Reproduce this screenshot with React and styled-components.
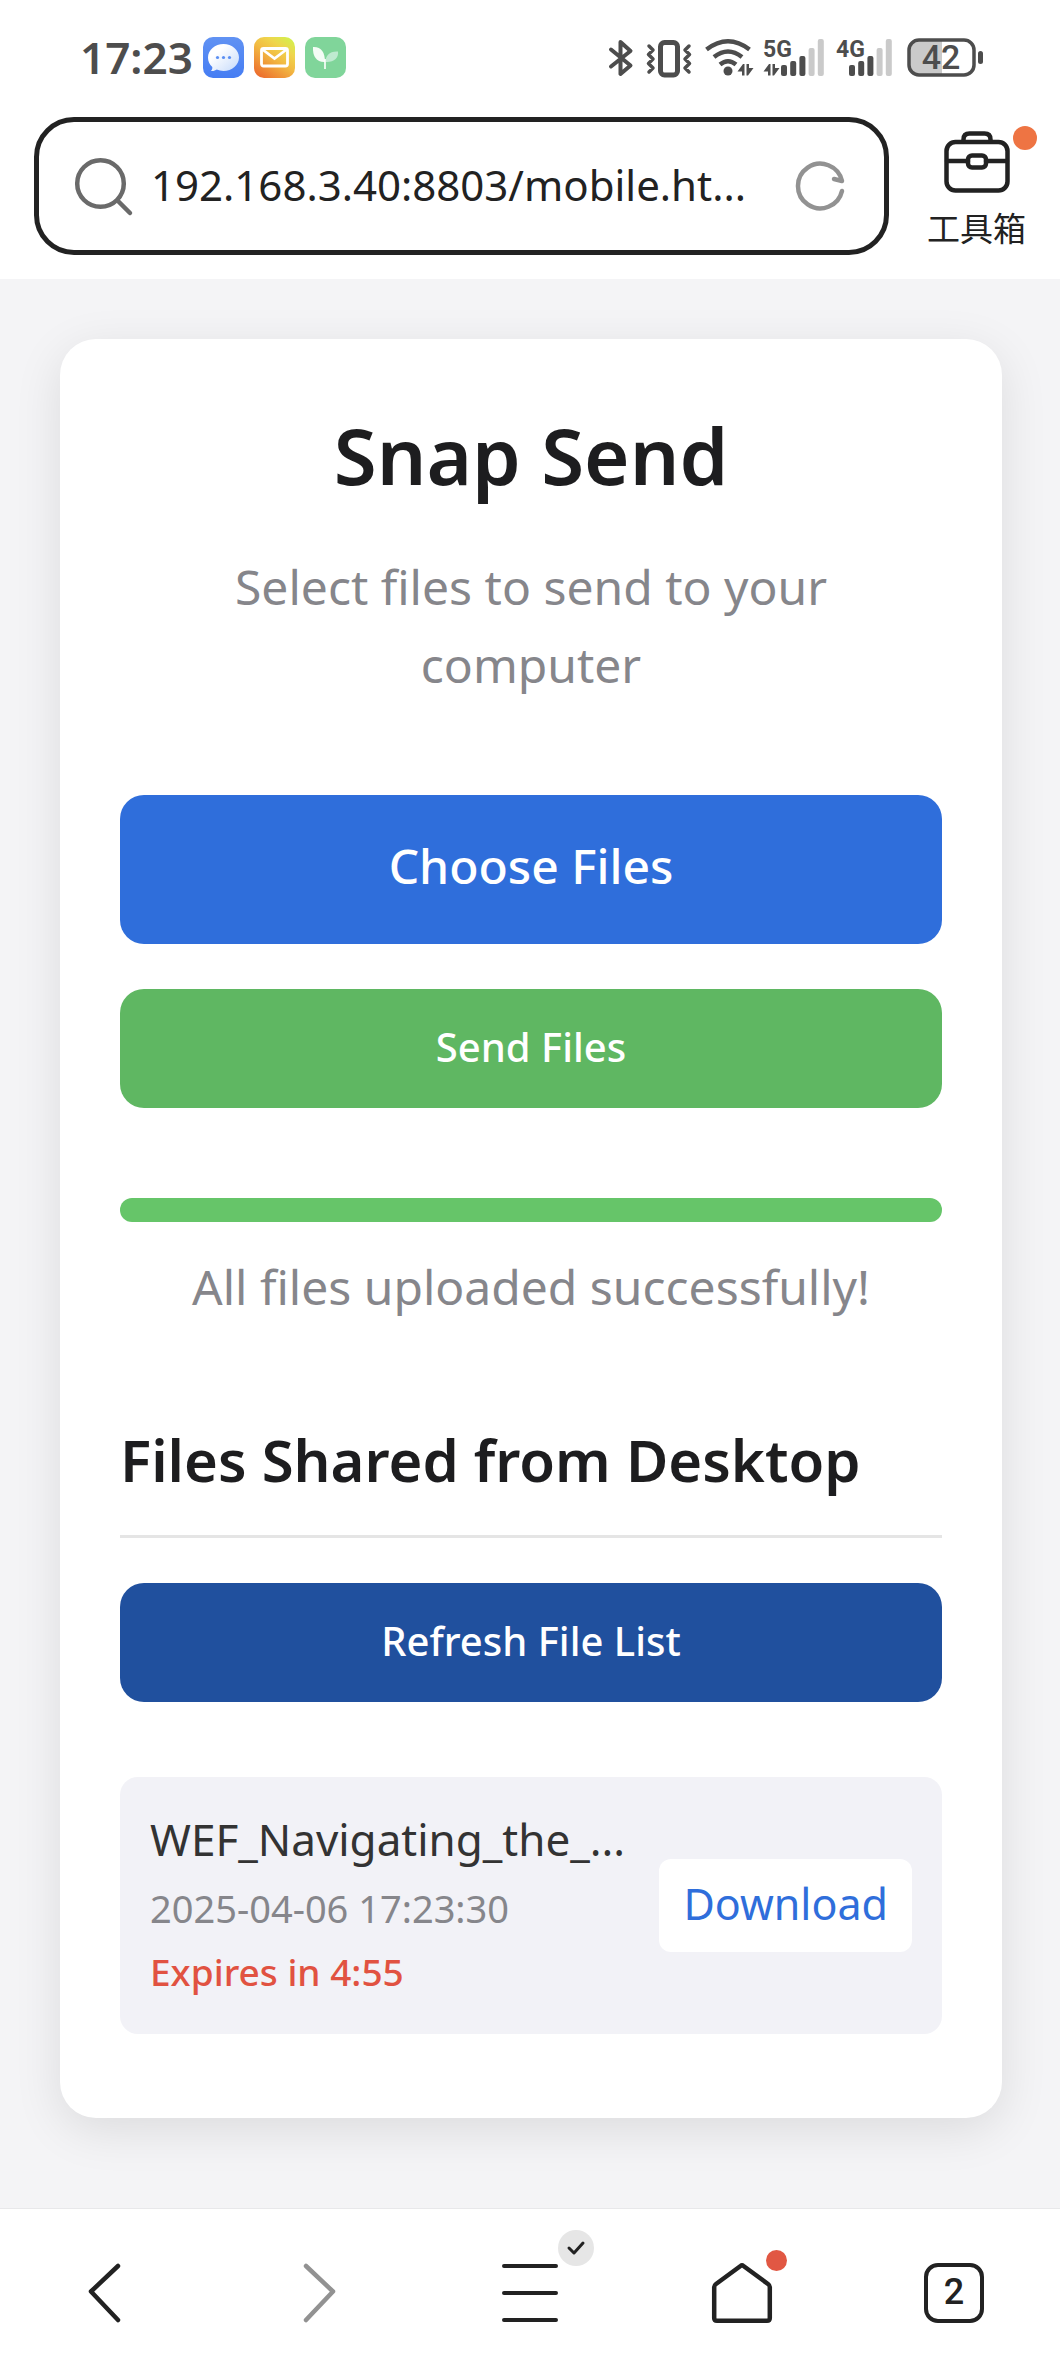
import React, { useRef } from "react";
import styled, { createGlobalStyle } from "styled-components";

const latin = `"Noto Sans", "Open Sans", sans-serif`;

const GlobalStyle = createGlobalStyle`
  *, *::before, *::after { box-sizing: border-box; }
  html, body, #root { height: 100%; }
  body {
    margin: 0;
    background: #f4f4f6;
    color: #1d1d1f;
    font-family: ${latin};
  }
  button, input { font: inherit; }
  button { border: 0; padding: 0; background: none; color: inherit; cursor: pointer; }
  svg { display: block; flex: none; overflow: visible; }
`;

const Screen = styled.div`
  display: flex;
  flex-direction: column;
  min-height: 100vh;
`;

const Header = styled.header`
  background: #fff;
  padding: 37px 34px 24px;
`;

const StatusBar = styled.div`
  display: flex;
  align-items: center;
  justify-content: space-between;
  height: 41px;
  margin-bottom: 39px;
  padding: 0 43px 0 46px;
  color: #4d4d4d;
`;

const StatusGroup = styled.div`
  display: flex;
  align-items: center;
  gap: ${(p) => p.$gap}px;
`;

const Clock = styled.time`
  padding-bottom: 2px;
  font-size: 44px;
  font-weight: 600;
  line-height: 40px;
`;

const AddressRow = styled.div`
  display: flex;
  align-items: center;
  gap: 38px;
`;

const AddressBar = styled.form`
  display: flex;
  flex: 1;
  min-width: 0;
  align-items: center;
  gap: 18px;
  height: 138px;
  padding: 0 38px 0 36px;
  border: 5px solid #222;
  border-radius: 40px;
`;

const AddressInput = styled.input`
  flex: 1;
  min-width: 0;
  height: 60px;
  padding: 0 0 4px;
  border: 0;
  outline: 0;
  background: transparent;
  color: #222;
  font-size: 42px;
`;

const Toolbox = styled.button`
  position: relative;
  display: flex;
  flex-direction: column;
  align-items: center;
  gap: 12px;
  padding-top: 8px;
  color: #222;
  font-family: "Noto Sans CJK SC", sans-serif;
  font-size: 33px;
  line-height: 44px;
`;

const Dot = styled.span`
  position: absolute;
  top: ${(p) => p.$top}px;
  right: ${(p) => p.$right}px;
  width: ${(p) => p.$size}px;
  height: ${(p) => p.$size}px;
  border-radius: 50%;
  background: ${(p) => p.$color};
`;

const Main = styled.main`
  flex: 1;
  padding: 60px 58px 60px 60px;
`;

const Card = styled.section`
  padding: 60px 60px 84px;
  border-radius: 36px;
  background: #fff;
  box-shadow: 0 12px 48px rgba(0, 0, 0, 0.1);
`;

const Title = styled.h1`
  margin: 0 0 37px;
  font-size: 78px;
  font-weight: 600;
  line-height: 112px;
  text-align: center;
`;

const Caption = styled.p`
  margin: 0;
  color: #86868b;
  font-size: 48px;
  line-height: 78px;
  text-align: center;
`;

const Actions = styled.div`
  display: flex;
  flex-direction: column;
  gap: 45px;
  margin: 91px 0 90px;
`;

const ActionButton = styled.button`
  display: block;
  width: 100%;
  height: ${(p) => (p.$large ? 149 : 119)}px;
  padding-bottom: ${(p) => (p.$large ? 8 : 4)}px;
  border-radius: 24px;
  background: ${(p) => p.$color};
  color: #fff;
  font-size: ${(p) => (p.$large ? 48 : 40)}px;
  font-weight: 500;
`;

const Progress = styled.progress`
  display: block;
  width: 100%;
  height: 24px;
  margin-bottom: 26px;
  border: 0;
  border-radius: 12px;
  overflow: hidden;
  appearance: none;
  background: #e5e5ea;

  &::-webkit-progress-bar { background: #e5e5ea; }
  &::-webkit-progress-value { background: #66c569; }
`;

const SectionTitle = styled.h2`
  margin: 92px 0 45px;
  padding-bottom: 33px;
  border-bottom: 3px solid #e5e5e5;
  font-size: 58px;
  font-weight: 600;
  line-height: 84px;
`;

const FileList = styled.ul`
  margin: 75px 0 0;
  padding: 0;
  list-style: none;
`;

const FileItem = styled.li`
  display: flex;
  align-items: center;
  justify-content: space-between;
  gap: 30px;
  padding: 29px 30px 30px;
  border-radius: 18px;
  background: #f2f2f7;
`;

const FileInfo = styled.div`
  min-width: 0;
`;

const FileName = styled.div`
  margin-bottom: 4px;
  overflow: hidden;
  color: #333;
  font-size: 44px;
  line-height: 66px;
  text-overflow: ellipsis;
  white-space: nowrap;
`;

const FileMeta = styled.div`
  color: ${(p) => (p.$alert ? "#e15241" : "#86868b")};
  font-size: ${(p) => (p.$alert ? 37 : 38)}px;
  font-weight: ${(p) => (p.$alert ? 500 : 400)};
  line-height: 64px;
`;

const DownloadButton = styled.button`
  flex: none;
  height: 93px;
  padding: 0 24px 4px;
  border-radius: 12px;
  background: #fff;
  color: #2f6edb;
  font-size: 43px;
`;

const BottomNav = styled.nav`
  display: grid;
  grid-template-columns: repeat(5, 1fr);
  height: 168px;
  border-top: 1px solid #e8e8ea;
  background: #fff;
`;

const NavButton = styled.button`
  display: flex;
  align-items: center;
  justify-content: center;
  color: ${(p) => (p.$muted ? "#929292" : "#222")};
`;

const NavIcon = styled.span`
  position: relative;
  display: block;
`;

const CheckBadge = styled.span`
  position: absolute;
  top: -33px;
  right: -34px;
  display: flex;
  align-items: center;
  justify-content: center;
  width: 36px;
  height: 36px;
  border-radius: 50%;
  background: #e6e6e6;
`;

const TabCount = styled.span`
  display: flex;
  align-items: center;
  justify-content: center;
  width: 60px;
  height: 60px;
  padding-bottom: 2px;
  border: 4px solid #222;
  border-radius: 14px;
  font-family: Roboto, sans-serif;
  font-size: 36px;
  font-weight: 500;
  line-height: 40px;
`;

const line = {
  fill: "none",
  stroke: "currentColor",
  strokeLinecap: "round",
  strokeLinejoin: "round",
};

function MessageApp() {
  return (
    <svg width="41" height="41" viewBox="0 0 41 41" aria-hidden="true">
      <defs>
        <linearGradient id="msgBg" x1="0" y1="0" x2="0" y2="1">
          <stop offset="0" stopColor="#6192f3" />
          <stop offset="1" stopColor="#457df3" />
        </linearGradient>
        <linearGradient id="msgBubble" x1="0" y1="0" x2="1" y2="1">
          <stop offset="0.3" stopColor="#fff" />
          <stop offset="1" stopColor="#c5dafb" />
        </linearGradient>
      </defs>
      <rect width="41" height="41" rx="10" fill="url(#msgBg)" />
      <path
        d="M20.5 7C29 7 36 13 36 20.500S29 34 20.500 34c-2.500 0-4.700-.5-6.700-1.400-1.500 1-3.600 1.800-6 1.400 1.200-.8 1.700-2.500 1.500-4C6.500 27.500 5 24.200 5 20.500 5 13 12 7 20.500 7z"
        fill="url(#msgBubble)"
      />
      <g fill="#5b8ff3">
        <circle cx="14.500" cy="20.500" r="1.600" />
        <circle cx="20.500" cy="20.500" r="1.600" />
        <circle cx="26.500" cy="20.500" r="1.600" />
      </g>
    </svg>
  );
}

function MailApp() {
  return (
    <svg width="41" height="41" viewBox="0 0 41 41" aria-hidden="true">
      <defs>
        <linearGradient id="mailBg" x1="0.15" y1="1" x2="0.85" y2="0">
          <stop offset="0" stopColor="#ec6b2d" />
          <stop offset="0.5" stopColor="#f2ba42" />
          <stop offset="0.75" stopColor="#efd54d" />
          <stop offset="1" stopColor="#d3f04d" />
        </linearGradient>
      </defs>
      <rect width="41" height="41" rx="10" fill="url(#mailBg)" />
      <rect x="7.500" y="11.500" width="26" height="17.500" rx="2" fill="none" stroke="#fff" strokeWidth="2.800" />
      <path d="M8.500 12.500l12 9 12-9" fill="none" stroke="#fff" strokeWidth="2.800" />
    </svg>
  );
}

function LeafApp() {
  return (
    <svg width="41" height="41" viewBox="0 0 41 41" aria-hidden="true">
      <rect width="41" height="41" rx="10" fill="#80d59a" />
      <path d="M8 10c8-.5 12 5 12 15C12 25.500 7.500 20 8 10z" fill="#f4fcf6" />
      <path d="M20.500 25c0-6.500 4-11 12.500-10.500.8 6.500-4 11-12.500 10.500z" fill="#bfead0" />
      <path d="M20 22v10" stroke="#fff" strokeWidth="1.600" />
    </svg>
  );
}

function BluetoothIcon() {
  return (
    <svg width="26" height="41" viewBox="0 0 26 41" {...line} strokeWidth="4" aria-hidden="true">
      <path d="M3 12.500L22.500 28.500 12.500 37V5l10 9L3 29.500" />
    </svg>
  );
}

function VibrateIcon() {
  return (
    <svg width="46" height="41" viewBox="0 0 46 41" {...line} aria-hidden="true">
      <rect x="14.500" y="5.500" width="17" height="32.500" rx="4" strokeWidth="5" />
      <path
        d="M3 9l4 4-4.500 4.500L7 22l-4.500 4.500L7 31l-4 4M43 9l-4 4 4.500 4.500L39 22l4.500 4.500L39 31l4 4"
        strokeWidth="3.500"
      />
    </svg>
  );
}

function DataArrows() {
  return (
    <path
      d="M7.500 0V11.500H5V7.500H.5L6 0zM9.500 0H12V4H16.500L11 11.500H9.500z"
      fill="currentColor"
      stroke="none"
    />
  );
}

function WifiIcon() {
  return (
    <svg width="47" height="41" viewBox="0 0 47 41" {...line} aria-hidden="true">
      <g strokeWidth="4.500" strokeLinecap="butt">
        <path d="M2.500 12.500Q24 -4 45.500 12.500" />
        <path d="M10 20Q24 9 38 20" />
        <path d="M16 27.500Q24 21 32 27.500" />
      </g>
      <circle cx="24" cy="34" r="4.500" fill="currentColor" stroke="none" />
      <g transform="translate(33 27)">
        <DataArrows />
      </g>
    </svg>
  );
}

function SignalIcon({ label, width, start, data }) {
  const tops = [28, 24, 19, 11, 2];
  return (
    <svg width={width} height="41" viewBox={`0 0 ${width} 41`} aria-hidden="true">
      <text x="0" y="20" fontSize="23" fontWeight="700" fontFamily="Roboto, sans-serif" fill="currentColor">
        {label}
      </text>
      {tops.map((top, i) => (
        <rect
          key={top}
          x={start + i * 9.2}
          y={top}
          width="6"
          height={39 - top}
          rx="2"
          fill={i < 3 ? "currentColor" : "#cacaca"}
        />
      ))}
      {data && (
        <g transform="translate(0 27)">
          <DataArrows />
        </g>
      )}
    </svg>
  );
}

function BatteryIcon() {
  return (
    <svg width="78" height="41" viewBox="0 0 78 41" aria-label="Battery 42 percent">
      <path d="M37 3H14Q4 3 4 13v15q0 10 10 10h23z" fill="#cacaca" />
      <rect x="4" y="3" width="65" height="35" rx="10" fill="none" stroke="currentColor" strokeWidth="3.500" />
      <rect x="73" y="14" width="5" height="13" rx="2.500" fill="currentColor" />
      <text x="36" y="32" textAnchor="middle" fontSize="34" fontWeight="500" fontFamily="Roboto, sans-serif" fill="currentColor">
        42
      </text>
    </svg>
  );
}

function SearchIcon() {
  return (
    <svg width="58" height="58" viewBox="0 0 58 58" {...line} strokeWidth="4.500" color="#6a6a6a" aria-hidden="true">
      <circle cx="25.500" cy="26.500" r="23.300" />
      <path d="M42.500 43.500L55 56" />
    </svg>
  );
}

function ReloadIcon() {
  return (
    <svg width="50" height="50" viewBox="0 0 50 50" {...line} strokeWidth="4.500" color="#929292" aria-hidden="true">
      <path d="M46 30A22.300 22.300 0 1 1 46 20l-8-2" />
    </svg>
  );
}

function BriefcaseIcon() {
  return (
    <svg width="66" height="62" viewBox="0 0 66 62" {...line} strokeWidth="4.500" aria-hidden="true">
      <rect x="2.500" y="11" width="61" height="48.500" rx="9" />
      <path d="M19.500 10V8.500q0-6 6-6h15q6 0 6 6V10M3 30h21M42 30h21" />
      <rect x="24" y="24.500" width="18" height="12" rx="4" />
    </svg>
  );
}

function ChevronIcon({ forward }) {
  return (
    <svg width="60" height="60" viewBox="0 0 60 60" {...line} strokeWidth="4.500" aria-hidden="true">
      <path d={forward ? "M18 3L45 28.500 18 57" : "M42 3L15 28.500 42 57"} />
    </svg>
  );
}

function MenuIcon() {
  return (
    <svg width="60" height="60" viewBox="0 0 60 60" {...line} strokeWidth="4" aria-hidden="true">
      <path d="M4 3h52M4 30h52M4 57h52" />
    </svg>
  );
}

function CheckIcon() {
  return (
    <svg width="18" height="14" viewBox="0 0 18 14" {...line} strokeWidth="3" aria-hidden="true">
      <path d="M2 7l5 5L16 2" />
    </svg>
  );
}

function HomeIcon() {
  return (
    <svg width="60" height="60" viewBox="0 0 60 60" {...line} strokeWidth="4.500" aria-hidden="true">
      <path d="M28.500 3Q30 1.800 31.500 3L56 21q1.800 1.300 1.800 3v31q0 2.800-2.800 2.800H5q-2.800 0-2.800-2.800V24q0-1.700 1.800-3z" />
    </svg>
  );
}

const files = [
  { name: "WEF_Navigating_the_...", date: "2025-04-06 17:23:30", expires: "Expires in 4:55" },
];

export default function App() {
  const picker = useRef(null);

  return (
    <>
      <GlobalStyle />
      <Screen>
        <Header>
          <StatusBar>
            <StatusGroup $gap={10}>
              <Clock>17:23</Clock>
              <MessageApp />
              <MailApp />
              <LeafApp />
            </StatusGroup>
            <StatusGroup $gap={12}>
              <BluetoothIcon />
              <VibrateIcon />
              <WifiIcon />
              <SignalIcon label="5G" width={61} start={18} data />
              <SignalIcon label="4G" width={57} start={13} />
              <BatteryIcon />
            </StatusGroup>
          </StatusBar>
          <AddressRow>
            <AddressBar onSubmit={(e) => e.preventDefault()}>
              <SearchIcon />
              <AddressInput aria-label="Address" defaultValue="192.168.3.40:8803/mobile.ht..." />
              <button type="button" aria-label="Reload">
                <ReloadIcon />
              </button>
            </AddressBar>
            <Toolbox type="button">
              <BriefcaseIcon />
              工具箱
              <Dot $top={3} $right={-11} $size={24} $color="#ee7443" />
            </Toolbox>
          </AddressRow>
        </Header>

        <Main>
          <Card>
            <Title>Snap Send</Title>
            <Caption>Select files to send to your computer</Caption>
            <Actions>
              <ActionButton type="button" $large $color="#2f6edb" onClick={() => picker.current.click()}>
                Choose Files
              </ActionButton>
              <input ref={picker} type="file" multiple hidden aria-label="Files" />
              <ActionButton type="button" $color="#5fb762">
                Send Files
              </ActionButton>
            </Actions>
            <Progress value={100} max={100} aria-label="Upload progress" />
            <Caption role="status">All files uploaded successfully!</Caption>

            <SectionTitle>Files Shared from Desktop</SectionTitle>
            <ActionButton type="button" $color="#20509e">
              Refresh File List
            </ActionButton>
            <FileList>
              {files.map((file) => (
                <FileItem key={file.name}>
                  <FileInfo>
                    <FileName>{file.name}</FileName>
                    <FileMeta>{file.date}</FileMeta>
                    <FileMeta $alert>{file.expires}</FileMeta>
                  </FileInfo>
                  <DownloadButton type="button">Download</DownloadButton>
                </FileItem>
              ))}
            </FileList>
          </Card>
        </Main>

        <BottomNav>
          <NavButton type="button" aria-label="Back">
            <ChevronIcon />
          </NavButton>
          <NavButton type="button" $muted aria-label="Forward">
            <ChevronIcon forward />
          </NavButton>
          <NavButton type="button" aria-label="Menu">
            <NavIcon>
              <MenuIcon />
              <CheckBadge>
                <CheckIcon />
              </CheckBadge>
            </NavIcon>
          </NavButton>
          <NavButton type="button" aria-label="Home">
            <NavIcon>
              <HomeIcon />
              <Dot $top={-13} $right={-15} $size={21} $color="#e15743" />
            </NavIcon>
          </NavButton>
          <NavButton type="button" aria-label="Tabs">
            <TabCount>2</TabCount>
          </NavButton>
        </BottomNav>
      </Screen>
    </>
  );
}
